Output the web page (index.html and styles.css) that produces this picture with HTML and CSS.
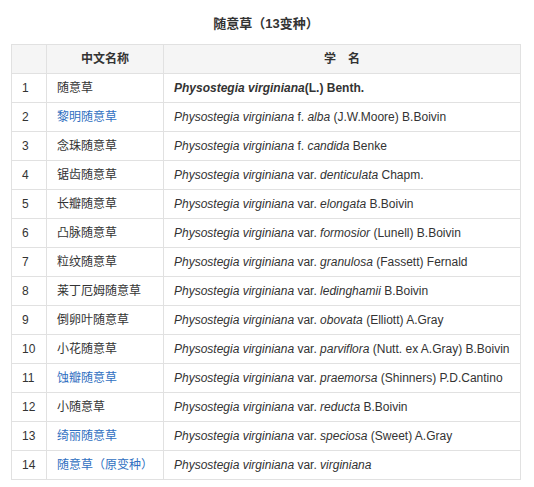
FILE: index.html
```html
<!DOCTYPE html>
<html lang="zh">
<head>
<meta charset="utf-8">
<link rel="stylesheet" href="styles.css">
</head>
<body>
<div class="wrap">
  <div class="title">随意草（13变种）</div>
  <table class="tbl">
    <thead>
      <tr><th class="c1"></th><th class="c2">中文名称</th><th class="c3">学　名</th></tr>
    </thead>
    <tbody>
      <tr><td>1</td><td>随意草</td><td><b><i>Physostegia virginiana</i>(L.) Benth.</b></td></tr>
      <tr><td>2</td><td><a>黎明随意草</a></td><td><i>Physostegia virginiana</i> f. <i>alba</i> (J.W.Moore) B.Boivin</td></tr>
      <tr><td>3</td><td>念珠随意草</td><td><i>Physostegia virginiana</i> f. <i>candida</i> Benke</td></tr>
      <tr><td>4</td><td>锯齿随意草</td><td><i>Physostegia virginiana</i> var. <i>denticulata</i> Chapm.</td></tr>
      <tr><td>5</td><td>长瓣随意草</td><td><i>Physostegia virginiana</i> var. <i>elongata</i> B.Boivin</td></tr>
      <tr><td>6</td><td>凸脉随意草</td><td><i>Physostegia virginiana</i> var. <i>formosior</i> (Lunell) B.Boivin</td></tr>
      <tr><td>7</td><td>粒纹随意草</td><td><i>Physostegia virginiana</i> var. <i>granulosa</i> (Fassett) Fernald</td></tr>
      <tr><td>8</td><td>莱丁厄姆随意草</td><td><i>Physostegia virginiana</i> var. <i>ledinghamii</i> B.Boivin</td></tr>
      <tr><td>9</td><td>倒卵叶随意草</td><td><i>Physostegia virginiana</i> var. <i>obovata</i> (Elliott) A.Gray</td></tr>
      <tr><td>10</td><td>小花随意草</td><td><i>Physostegia virginiana</i> var. <i>parviflora</i> (Nutt. ex A.Gray) B.Boivin</td></tr>
      <tr><td>11</td><td><a>蚀瓣随意草</a></td><td><i>Physostegia virginiana</i> var. <i>praemorsa</i> (Shinners) P.D.Cantino</td></tr>
      <tr><td>12</td><td>小随意草</td><td><i>Physostegia virginiana</i> var. <i>reducta</i> B.Boivin</td></tr>
      <tr><td>13</td><td><a>绮丽随意草</a></td><td><i>Physostegia virginiana</i> var. <i>speciosa</i> (Sweet) A.Gray</td></tr>
      <tr><td>14</td><td><a>随意草（原变种）</a></td><td><i>Physostegia virginiana</i> var. <i>virginiana</i></td></tr>
    </tbody>
  </table>
</div>
</body>
</html>
```
FILE: styles.css
```css
html, body {
  margin: 0;
  padding: 0;
  background: #fff;
}
body {
  font-family: "Liberation Sans", Arial, "Noto Sans CJK SC", sans-serif;
  font-size: 12px;
  color: #333;
}
.wrap {
  padding: 15px 0 0 11px;
  width: 510px;
}
.title {
  text-align: center;
  font-size: 13px;
  font-weight: bold;
  line-height: 18px;
  height: 29px;
  color: #333;
}
.tbl {
  border-collapse: collapse;
  width: 510px;
  table-layout: fixed;
}
.tbl th, .tbl td {
  border: 1px solid #e1e1e1;
  height: 28px;
  padding: 0 10px;
  line-height: 16px;
  text-align: left;
  vertical-align: middle;
  white-space: nowrap;
}
.tbl th {
  background: #f5f5f5;
  font-weight: bold;
  text-align: center;
}
.c1 { width: 14px; }
.c2 { width: 96px; }
.tbl a {
  color: #2f6fc1;
  text-decoration: none;
}
```
